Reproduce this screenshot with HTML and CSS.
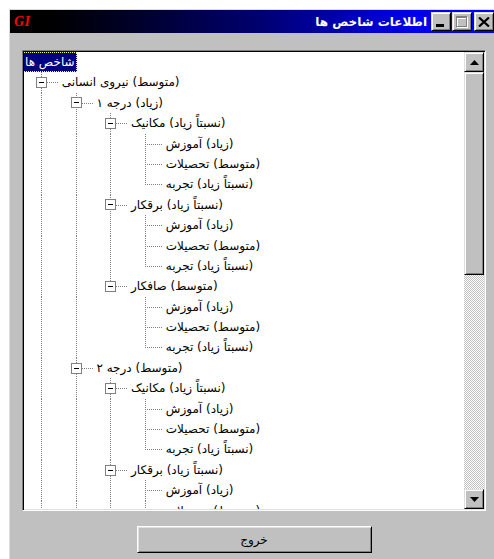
FILE: index.html
```html
<!DOCTYPE html>
<html lang="fa">
<head>
<meta charset="utf-8">
<title>اطلاعات شاخص ها</title>
<link rel="stylesheet" href="styles.css">
</head>
<body>
<div class="window">
  <div class="titlebar">
    <span class="logo">GI</span>
    <span class="caption">اطلاعات شاخص ها</span>
    <div class="caption-buttons">
      <span class="cap-btn">
        <svg width="8" height="3" viewBox="0 0 8 3"><rect x="0" y="0" width="8" height="3" fill="#000"/></svg>
      </span>
      <span class="cap-btn">
        <svg width="12" height="12" viewBox="0 0 12 12">
          <rect x="1.5" y="1.5" width="10" height="10" fill="none" stroke="#fff"/>
          <rect x="1" y="1" width="10" height="2" fill="#fff"/>
          <rect x="0.5" y="0.5" width="10" height="10" fill="none" stroke="#808080"/>
          <rect x="0" y="0" width="11" height="2" fill="#808080"/>
        </svg>
      </span>
      <span class="cap-btn close">
        <svg width="12" height="10" viewBox="0 0 12 10"><path d="M1 0.5 L11 9.5 M11 0.5 L1 9.5" stroke="#000" stroke-width="2.2"/></svg>
      </span>
    </div>
  </div>

  <div class="client">
    <div class="treebox">
      <div class="tree">
        <div class="row"><span class="label sel">شاخص ها</span></div>

        <div class="row"><span class="c t"><span class="box"></span></span><span class="label">(متوسط) نیروی انسانی</span></div>
        <div class="row"><span class="c v"></span><span class="c t"><span class="box"></span></span><span class="label">(زیاد) درجه ۱</span></div>

        <div class="row"><span class="c v"></span><span class="c v"></span><span class="c t"><span class="box"></span></span><span class="label">(نسبتاً زیاد) مکانیک</span></div>
        <div class="row"><span class="c v"></span><span class="c v"></span><span class="c v"></span><span class="c t"></span><span class="label">(زیاد) آموزش</span></div>
        <div class="row"><span class="c v"></span><span class="c v"></span><span class="c v"></span><span class="c t"></span><span class="label">(متوسط) تحصیلات</span></div>
        <div class="row"><span class="c v"></span><span class="c v"></span><span class="c v"></span><span class="c l"></span><span class="label">(نسبتاً زیاد) تجربه</span></div>

        <div class="row"><span class="c v"></span><span class="c v"></span><span class="c t"><span class="box"></span></span><span class="label">(نسبتاً زیاد) برقکار</span></div>
        <div class="row"><span class="c v"></span><span class="c v"></span><span class="c v"></span><span class="c t"></span><span class="label">(زیاد) آموزش</span></div>
        <div class="row"><span class="c v"></span><span class="c v"></span><span class="c v"></span><span class="c t"></span><span class="label">(متوسط) تحصیلات</span></div>
        <div class="row"><span class="c v"></span><span class="c v"></span><span class="c v"></span><span class="c l"></span><span class="label">(نسبتاً زیاد) تجربه</span></div>

        <div class="row"><span class="c v"></span><span class="c v"></span><span class="c l"><span class="box"></span></span><span class="label">(متوسط) صافکار</span></div>
        <div class="row"><span class="c v"></span><span class="c v"></span><span class="c"></span><span class="c t"></span><span class="label">(زیاد) آموزش</span></div>
        <div class="row"><span class="c v"></span><span class="c v"></span><span class="c"></span><span class="c t"></span><span class="label">(متوسط) تحصیلات</span></div>
        <div class="row"><span class="c v"></span><span class="c v"></span><span class="c"></span><span class="c l"></span><span class="label">(نسبتاً زیاد) تجربه</span></div>

        <div class="row"><span class="c v"></span><span class="c t"><span class="box"></span></span><span class="label">(متوسط) درجه ۲</span></div>

        <div class="row"><span class="c v"></span><span class="c v"></span><span class="c t"><span class="box"></span></span><span class="label">(نسبتاً زیاد) مکانیک</span></div>
        <div class="row"><span class="c v"></span><span class="c v"></span><span class="c v"></span><span class="c t"></span><span class="label">(زیاد) آموزش</span></div>
        <div class="row"><span class="c v"></span><span class="c v"></span><span class="c v"></span><span class="c t"></span><span class="label">(متوسط) تحصیلات</span></div>
        <div class="row"><span class="c v"></span><span class="c v"></span><span class="c v"></span><span class="c l"></span><span class="label">(نسبتاً زیاد) تجربه</span></div>

        <div class="row"><span class="c v"></span><span class="c v"></span><span class="c t"><span class="box"></span></span><span class="label">(نسبتاً زیاد) برقکار</span></div>
        <div class="row"><span class="c v"></span><span class="c v"></span><span class="c v"></span><span class="c t"></span><span class="label">(زیاد) آموزش</span></div>
        <div class="row"><span class="c v"></span><span class="c v"></span><span class="c v"></span><span class="c t"></span><span class="label">(متوسط) تحصیلات</span></div>
      </div>

      <div class="vscroll">
        <span class="sb-btn">
          <svg width="9" height="5" viewBox="0 0 9 5"><polygon points="4.5,0 9,5 0,5" fill="#000"/></svg>
        </span>
        <span class="sb-thumb"></span>
        <span class="sb-track"></span>
        <span class="sb-btn">
          <svg width="9" height="5" viewBox="0 0 9 5"><polygon points="0,0 9,0 4.5,5" fill="#000"/></svg>
        </span>
      </div>
    </div>

    <div class="actions">
      <button class="btn" type="button">خروج</button>
    </div>
  </div>
</div>
</body>
</html>
```

FILE: styles.css
```css
html, body {
  margin: 0;
  padding: 0;
  background: #fff;
  overflow: hidden;
}

/* dialog frame */
.window {
  margin: 9px 0 0 9px;
  width: 485px;
  height: 550px;
  box-sizing: border-box;
  border-left: 1px solid #dcdcdc;
  border-top: 1px solid #dcdcdc;
  background: #c0c0c0;
  display: flex;
  flex-direction: column;
}

/* caption bar */
.titlebar {
  height: 23px;
  flex: none;
  display: flex;
  align-items: center;
  padding-left: 4px;
  background: linear-gradient(to right, #000 0, #000 38px, #000018 90px, #000070 250px, #0000e8 400px, #0000ff 100%);
}

.logo {
  font-family: "Liberation Serif", serif;
  font-style: italic;
  font-weight: bold;
  font-size: 14px;
  color: #ff0000;
  letter-spacing: 0.5px;
}

.caption {
  margin-left: auto;
  margin-right: 4px;
  font-family: "DejaVu Sans", sans-serif;
  font-weight: bold;
  font-size: 12px;
  color: #fff;
  direction: rtl;
  white-space: nowrap;
}

.caption-buttons {
  display: flex;
  align-items: center;
}

.cap-btn {
  width: 20px;
  height: 19px;
  box-sizing: border-box;
  display: flex;
  align-items: center;
  justify-content: center;
  background: #c0c0c0;
  border: 1px solid;
  border-color: #dfdfdf #000 #000 #dfdfdf;
  box-shadow: inset 1px 1px #fff, inset -1px -1px #808080;
}

.cap-btn + .cap-btn {
  margin-left: 1px;
}

.cap-btn.close {
  margin-left: 2px;
}

.cap-btn:first-child svg {
  margin-top: 7px;
  margin-right: 2px;
}

/* client area */
.client {
  flex: 1;
  display: flex;
  flex-direction: column;
  padding: 17px 8px 0 12px;
}

.treebox {
  width: 464px;
  height: 461px;
  box-sizing: border-box;
  display: flex;
  background: #fff;
  border: 1px solid;
  border-color: #808080 #fff #fff #808080;
  box-shadow: inset 1px 1px #000, inset -1px -1px #dfdfdf;
  padding: 1px;
}

.tree {
  flex: 1;
  overflow: hidden;
  font-family: "DejaVu Sans", sans-serif;
  font-size: 12px;
  color: #000;
}

.row {
  height: 20.4px;
  display: flex;
  align-items: stretch;
}

/* connector cells */
.c {
  flex: none;
  width: 34.7px;
  display: flex;
  align-items: center;
}

.c.v {
  background: repeating-linear-gradient(to bottom, #808080 0 1px, transparent 1px 2px) 17px 0 / 1px 100% no-repeat;
}

.c.t {
  background:
    repeating-linear-gradient(to bottom, #808080 0 1px, transparent 1px 2px) 17px 0 / 1px 100% no-repeat,
    repeating-linear-gradient(to right, #808080 0 1px, transparent 1px 2px) 17px 10px / 18px 1px no-repeat;
}

.c.l {
  background:
    repeating-linear-gradient(to bottom, #808080 0 1px, transparent 1px 2px) 17px 0 / 1px 10px no-repeat,
    repeating-linear-gradient(to right, #808080 0 1px, transparent 1px 2px) 17px 10px / 18px 1px no-repeat;
}

/* expand / collapse box */
.box {
  width: 11px;
  height: 11px;
  margin-left: 12px;
  box-sizing: border-box;
  border: 1px solid #808080;
  background: #fff linear-gradient(#000, #000) center / 5px 1px no-repeat;
}

.label {
  margin-left: 3px;
  line-height: 20.4px;
  white-space: nowrap;
  direction: rtl;
  unicode-bidi: isolate;
}

.label.sel {
  margin-left: -1px;
  padding: 0 2px;
  background: #000080;
  color: #fff;
  outline: 1px dotted #ffff80;
  outline-offset: -1px;
}

/* vertical scroll bar */
.vscroll {
  flex: none;
  width: 20px;
  display: flex;
  flex-direction: column;
}

.sb-btn {
  flex: none;
  height: 20px;
  box-sizing: border-box;
  display: flex;
  align-items: center;
  justify-content: center;
  background: #c0c0c0;
  border: 1px solid;
  border-color: #dfdfdf #000 #000 #dfdfdf;
  box-shadow: inset 1px 1px #fff, inset -1px -1px #808080;
}

.sb-thumb {
  flex: none;
  height: 203px;
  box-sizing: border-box;
  background: #c0c0c0;
  border: 1px solid;
  border-color: #dfdfdf #000 #000 #dfdfdf;
  box-shadow: inset 1px 1px #fff, inset -1px -1px #808080;
}

.sb-track {
  flex: 1;
  background: repeating-conic-gradient(#c0c0c0 0 25%, #fff 0 50%) 0 0 / 2px 2px;
}

/* button row */
.actions {
  width: 464px;
  display: flex;
  justify-content: center;
  margin-top: 15px;
}

.btn {
  width: 235px;
  height: 27px;
  padding: 0;
  font-family: "DejaVu Sans", sans-serif;
  font-size: 12px;
  color: #000;
  background: #c0c0c0;
  border: 1px solid;
  border-color: #fff #000 #000 #fff;
  box-shadow: inset 1px 1px #dfdfdf, inset -1px -1px #808080;
  border-radius: 0;
}
```
